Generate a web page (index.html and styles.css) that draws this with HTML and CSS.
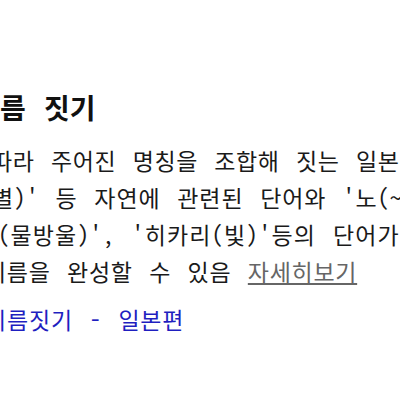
FILE: index.html
```html
<!DOCTYPE html>
<html lang="ko">
<head>
<meta charset="utf-8">
<link rel="stylesheet" href="styles.css">
</head>
<body>
<div class="page">
  <h2 class="title">름 짓기</h2>
  <div class="desc">
    <div class="line l1">따라 주어진 명칭을 조합해 짓는 일본식</div>
    <div class="line l2">별)' 등 자연에 관련된 단어와 '노(~의)'</div>
    <div class="line l3">(물방울)', '히카리(빛)'등의 단어가</div>
    <div class="line l4">이름을 완성할 수 있음 <a class="more" href="#">자세히보기</a></div>
  </div>
  <a class="related" href="#">이름짓기 - 일본편</a>
</div>
</body>
</html>
```

FILE: styles.css
```css
html, body {
  margin: 0;
  padding: 0;
  background: #ffffff;
}
body {
  width: 400px;
  height: 400px;
  overflow: hidden;
  font-family: "Noto Sans CJK KR", "Noto Sans", sans-serif;
  font-feature-settings: "hwid" 1;
  word-spacing: 0.27em;
}
.page {
  padding-top: 92px;
  display: flex;
  flex-direction: column;
  align-items: flex-start;
}
.title {
  margin: 0;
  font-size: 28px;
  line-height: 30px;
  font-weight: 700;
  color: #111111;
  white-space: nowrap;
}
.desc {
  margin-top: 20px;
  font-size: 23px;
  line-height: 37px;
  color: #1a1a1a;
  letter-spacing: 0.6px;
}
.line {
  white-space: nowrap;
}
.l1 { margin-left: -9px; }
.l2 { margin-left: -8px; letter-spacing: 0.9px; }
.l3 { margin-left: -2px; letter-spacing: 1.1px; }
.l4 { margin-left: -15px; letter-spacing: 0.7px; }
.more {
  color: #666666;
  text-decoration: underline;
}
.related {
  margin-top: 11px;
  margin-left: -15px;
  font-size: 23px;
  line-height: 37px;
  letter-spacing: 0.8px;
  color: #1f1fc0;
  text-decoration: none;
  white-space: nowrap;
}
```
